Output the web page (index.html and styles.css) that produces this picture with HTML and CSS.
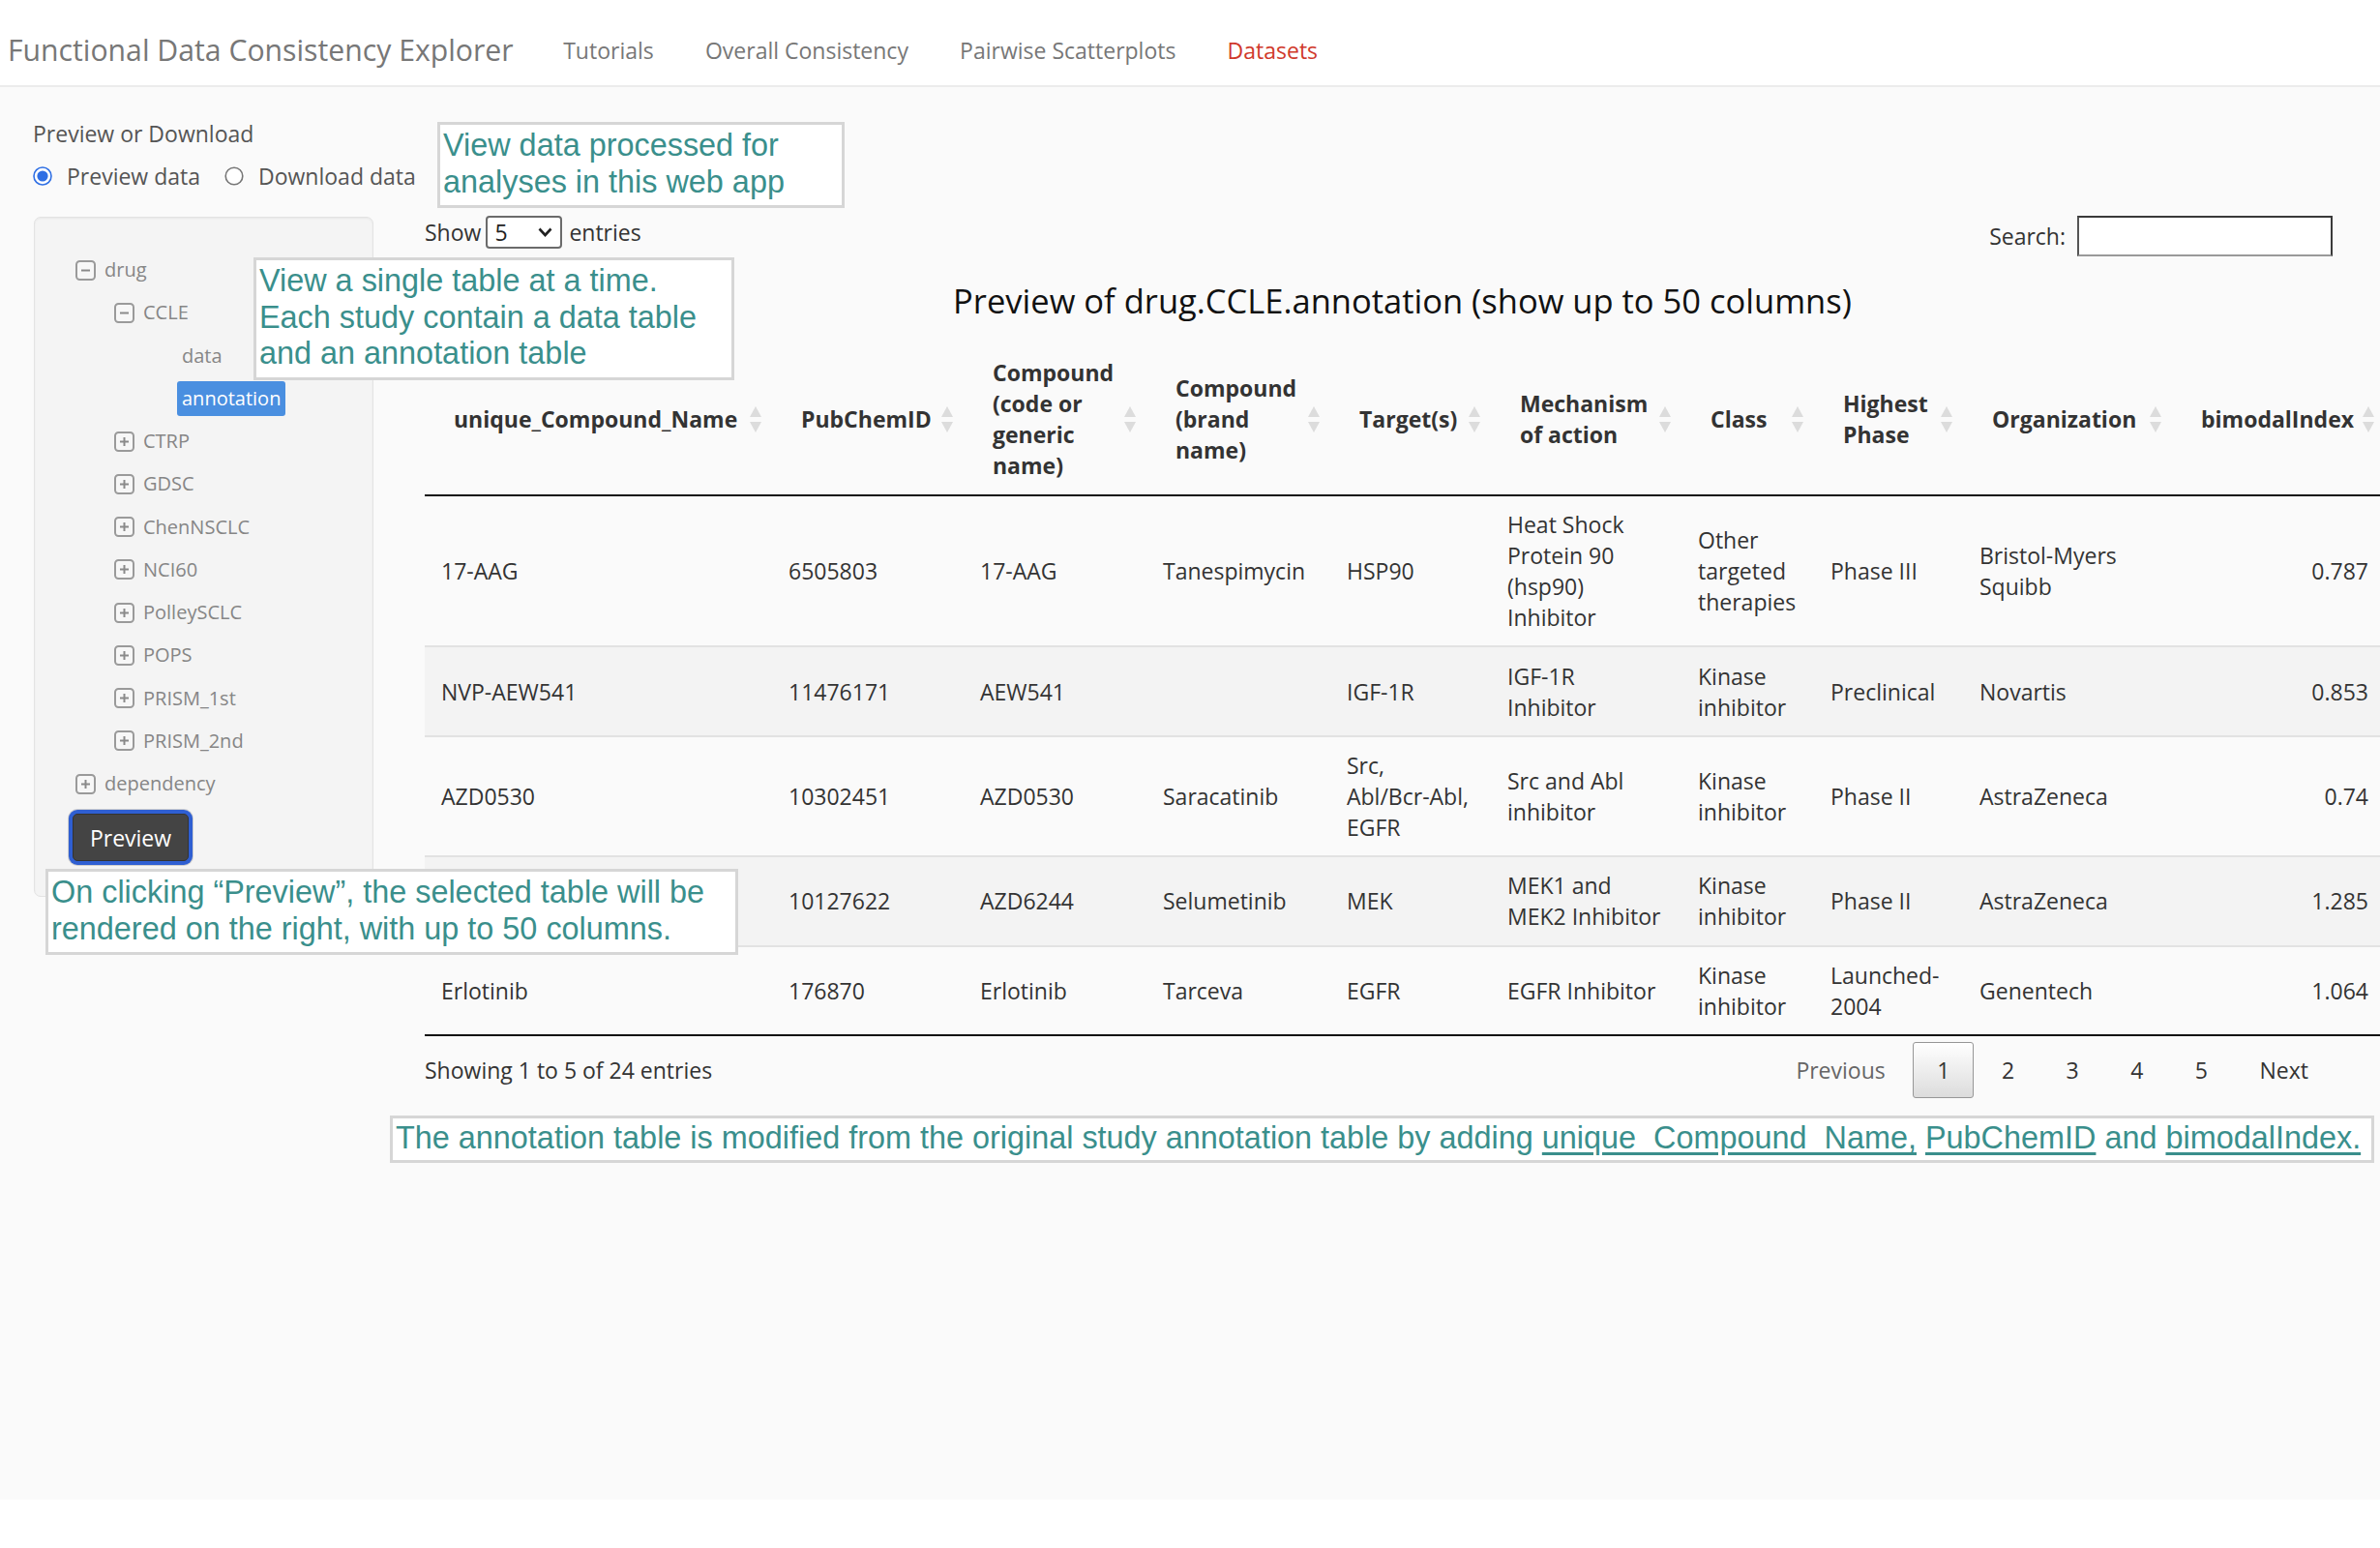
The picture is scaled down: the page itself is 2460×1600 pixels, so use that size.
FILE: index.html
```html
<!DOCTYPE html>
<html lang="en">
<head>
<meta charset="utf-8">
<title>Functional Data Consistency Explorer</title>
<link rel="stylesheet" href="styles.css">
</head>
<body>
<nav class="navbar">
  <span class="brand">Functional Data Consistency Explorer</span>
  <a class="nav-link">Tutorials</a>
  <a class="nav-link">Overall Consistency</a>
  <a class="nav-link">Pairwise Scatterplots</a>
  <a class="nav-link active">Datasets</a>
</nav>

<div class="page">
  <aside class="sidebar">
    <div class="ctl-label">Preview or Download</div>
    <div class="radios">
      <label class="radio">
        <svg class="radio-ico" width="20" height="20" viewBox="0 0 20 20"><circle cx="10" cy="10" r="9" fill="#fff" stroke="#2f6fe4" stroke-width="1.6"/><circle cx="10" cy="10" r="5.6" fill="#2f6fe4"/></svg>
        <span>Preview data</span>
      </label>
      <label class="radio">
        <svg class="radio-ico" width="20" height="20" viewBox="0 0 20 20"><circle cx="10" cy="10" r="8.8" fill="#fff" stroke="#767676" stroke-width="1.6"/></svg>
        <span>Download data</span>
      </label>
    </div>

    <div class="well">
      <ul class="tree">
        <li class="node lvl0"><svg class="tico" width="21" height="21" viewBox="0 0 21 21"><rect x="1" y="1" width="19" height="19" rx="3.5" fill="#f7f7f7" stroke="#9a9a9a" stroke-width="2"/><line x1="6" y1="10.5" x2="15" y2="10.5" stroke="#8a8a8a" stroke-width="2"/></svg><span class="tx">drug</span></li>
        <li class="node lvl1"><svg class="tico" width="21" height="21" viewBox="0 0 21 21"><rect x="1" y="1" width="19" height="19" rx="3.5" fill="#f7f7f7" stroke="#9a9a9a" stroke-width="2"/><line x1="6" y1="10.5" x2="15" y2="10.5" stroke="#8a8a8a" stroke-width="2"/></svg><span class="tx">CCLE</span></li>
        <li class="node lvl2 leaf"><span class="tslot"></span><span class="tx">data</span></li>
        <li class="node lvl2 leaf"><span class="tslot"></span><span class="tx selected">annotation</span></li>
        <li class="node lvl1"><svg class="tico" width="21" height="21" viewBox="0 0 21 21"><rect x="1" y="1" width="19" height="19" rx="3.5" fill="#f7f7f7" stroke="#9a9a9a" stroke-width="2"/><line x1="6" y1="10.5" x2="15" y2="10.5" stroke="#8a8a8a" stroke-width="2"/><line x1="10.5" y1="6" x2="10.5" y2="15" stroke="#8a8a8a" stroke-width="2"/></svg><span class="tx">CTRP</span></li>
        <li class="node lvl1"><svg class="tico" width="21" height="21" viewBox="0 0 21 21"><rect x="1" y="1" width="19" height="19" rx="3.5" fill="#f7f7f7" stroke="#9a9a9a" stroke-width="2"/><line x1="6" y1="10.5" x2="15" y2="10.5" stroke="#8a8a8a" stroke-width="2"/><line x1="10.5" y1="6" x2="10.5" y2="15" stroke="#8a8a8a" stroke-width="2"/></svg><span class="tx">GDSC</span></li>
        <li class="node lvl1"><svg class="tico" width="21" height="21" viewBox="0 0 21 21"><rect x="1" y="1" width="19" height="19" rx="3.5" fill="#f7f7f7" stroke="#9a9a9a" stroke-width="2"/><line x1="6" y1="10.5" x2="15" y2="10.5" stroke="#8a8a8a" stroke-width="2"/><line x1="10.5" y1="6" x2="10.5" y2="15" stroke="#8a8a8a" stroke-width="2"/></svg><span class="tx">ChenNSCLC</span></li>
        <li class="node lvl1"><svg class="tico" width="21" height="21" viewBox="0 0 21 21"><rect x="1" y="1" width="19" height="19" rx="3.5" fill="#f7f7f7" stroke="#9a9a9a" stroke-width="2"/><line x1="6" y1="10.5" x2="15" y2="10.5" stroke="#8a8a8a" stroke-width="2"/><line x1="10.5" y1="6" x2="10.5" y2="15" stroke="#8a8a8a" stroke-width="2"/></svg><span class="tx">NCI60</span></li>
        <li class="node lvl1"><svg class="tico" width="21" height="21" viewBox="0 0 21 21"><rect x="1" y="1" width="19" height="19" rx="3.5" fill="#f7f7f7" stroke="#9a9a9a" stroke-width="2"/><line x1="6" y1="10.5" x2="15" y2="10.5" stroke="#8a8a8a" stroke-width="2"/><line x1="10.5" y1="6" x2="10.5" y2="15" stroke="#8a8a8a" stroke-width="2"/></svg><span class="tx">PolleySCLC</span></li>
        <li class="node lvl1"><svg class="tico" width="21" height="21" viewBox="0 0 21 21"><rect x="1" y="1" width="19" height="19" rx="3.5" fill="#f7f7f7" stroke="#9a9a9a" stroke-width="2"/><line x1="6" y1="10.5" x2="15" y2="10.5" stroke="#8a8a8a" stroke-width="2"/><line x1="10.5" y1="6" x2="10.5" y2="15" stroke="#8a8a8a" stroke-width="2"/></svg><span class="tx">POPS</span></li>
        <li class="node lvl1"><svg class="tico" width="21" height="21" viewBox="0 0 21 21"><rect x="1" y="1" width="19" height="19" rx="3.5" fill="#f7f7f7" stroke="#9a9a9a" stroke-width="2"/><line x1="6" y1="10.5" x2="15" y2="10.5" stroke="#8a8a8a" stroke-width="2"/><line x1="10.5" y1="6" x2="10.5" y2="15" stroke="#8a8a8a" stroke-width="2"/></svg><span class="tx">PRISM_1st</span></li>
        <li class="node lvl1"><svg class="tico" width="21" height="21" viewBox="0 0 21 21"><rect x="1" y="1" width="19" height="19" rx="3.5" fill="#f7f7f7" stroke="#9a9a9a" stroke-width="2"/><line x1="6" y1="10.5" x2="15" y2="10.5" stroke="#8a8a8a" stroke-width="2"/><line x1="10.5" y1="6" x2="10.5" y2="15" stroke="#8a8a8a" stroke-width="2"/></svg><span class="tx">PRISM_2nd</span></li>
        <li class="node lvl0"><svg class="tico" width="21" height="21" viewBox="0 0 21 21"><rect x="1" y="1" width="19" height="19" rx="3.5" fill="#f7f7f7" stroke="#9a9a9a" stroke-width="2"/><line x1="6" y1="10.5" x2="15" y2="10.5" stroke="#8a8a8a" stroke-width="2"/><line x1="10.5" y1="6" x2="10.5" y2="15" stroke="#8a8a8a" stroke-width="2"/></svg><span class="tx">dependency</span></li>
      </ul>
      <button class="btn-preview" type="button">Preview</button>
    </div>
  </aside>

  <main class="main">
    <div class="dt-top">
      <div class="dt-length">
        <span>Show</span>
        <span class="fake-select"><span>5</span><svg width="15" height="10" viewBox="0 0 15 10"><polyline points="1.5,1.5 7.5,8 13.5,1.5" fill="none" stroke="#222" stroke-width="2.6"/></svg></span>
        <span>entries</span>
      </div>
      <div class="dt-filter">
        <span>Search:</span>
        <input class="search-input" type="search">
      </div>
    </div>

    <h4 class="tbl-title">Preview of drug.CCLE.annotation (show up to 50 columns)</h4>

    <table class="dtable">
      <colgroup>
        <col class="c1"><col class="c2"><col class="c3"><col class="c4"><col class="c5">
        <col class="c6"><col class="c7"><col class="c8"><col class="c9"><col class="c10">
      </colgroup>
      <thead>
        <tr>
          <th><div class="th-in"><span>unique_Compound_Name</span><svg class="sort" width="12" height="27" viewBox="0 0 12 27"><polygon points="6,0 12,11 0,11" fill="#dcdcdc"/><polygon points="0,16 12,16 6,27" fill="#dcdcdc"/></svg></div></th>
          <th><div class="th-in"><span>PubChemID</span><svg class="sort" width="12" height="27" viewBox="0 0 12 27"><polygon points="6,0 12,11 0,11" fill="#dcdcdc"/><polygon points="0,16 12,16 6,27" fill="#dcdcdc"/></svg></div></th>
          <th><div class="th-in"><span>Compound (code or generic name)</span><svg class="sort" width="12" height="27" viewBox="0 0 12 27"><polygon points="6,0 12,11 0,11" fill="#dcdcdc"/><polygon points="0,16 12,16 6,27" fill="#dcdcdc"/></svg></div></th>
          <th><div class="th-in"><span>Compound (brand name)</span><svg class="sort" width="12" height="27" viewBox="0 0 12 27"><polygon points="6,0 12,11 0,11" fill="#dcdcdc"/><polygon points="0,16 12,16 6,27" fill="#dcdcdc"/></svg></div></th>
          <th><div class="th-in"><span>Target(s)</span><svg class="sort" width="12" height="27" viewBox="0 0 12 27"><polygon points="6,0 12,11 0,11" fill="#dcdcdc"/><polygon points="0,16 12,16 6,27" fill="#dcdcdc"/></svg></div></th>
          <th><div class="th-in"><span>Mechanism of action</span><svg class="sort" width="12" height="27" viewBox="0 0 12 27"><polygon points="6,0 12,11 0,11" fill="#dcdcdc"/><polygon points="0,16 12,16 6,27" fill="#dcdcdc"/></svg></div></th>
          <th><div class="th-in"><span>Class</span><svg class="sort" width="12" height="27" viewBox="0 0 12 27"><polygon points="6,0 12,11 0,11" fill="#dcdcdc"/><polygon points="0,16 12,16 6,27" fill="#dcdcdc"/></svg></div></th>
          <th><div class="th-in"><span>Highest Phase</span><svg class="sort" width="12" height="27" viewBox="0 0 12 27"><polygon points="6,0 12,11 0,11" fill="#dcdcdc"/><polygon points="0,16 12,16 6,27" fill="#dcdcdc"/></svg></div></th>
          <th><div class="th-in"><span>Organization</span><svg class="sort" width="12" height="27" viewBox="0 0 12 27"><polygon points="6,0 12,11 0,11" fill="#dcdcdc"/><polygon points="0,16 12,16 6,27" fill="#dcdcdc"/></svg></div></th>
          <th><div class="th-in"><span>bimodalIndex</span><svg class="sort" width="12" height="27" viewBox="0 0 12 27"><polygon points="6,0 12,11 0,11" fill="#dcdcdc"/><polygon points="0,16 12,16 6,27" fill="#dcdcdc"/></svg></div></th>
        </tr>
      </thead>
      <tbody>
        <tr>
          <td>17-AAG</td><td>6505803</td><td>17-AAG</td><td>Tanespimycin</td><td>HSP90</td>
          <td>Heat Shock Protein 90 (hsp90) Inhibitor</td><td>Other targeted therapies</td><td>Phase III</td><td>Bristol-Myers Squibb</td><td class="num">0.787</td>
        </tr>
        <tr>
          <td>NVP-AEW541</td><td>11476171</td><td>AEW541</td><td></td><td>IGF-1R</td>
          <td>IGF-1R Inhibitor</td><td>Kinase inhibitor</td><td>Preclinical</td><td>Novartis</td><td class="num">0.853</td>
        </tr>
        <tr>
          <td>AZD0530</td><td>10302451</td><td>AZD0530</td><td>Saracatinib</td><td>Src, <span class="nw">Abl/Bcr-Abl,</span> EGFR</td>
          <td>Src and Abl inhibitor</td><td>Kinase inhibitor</td><td>Phase II</td><td>AstraZeneca</td><td class="num">0.74</td>
        </tr>
        <tr>
          <td>AZD6244</td><td>10127622</td><td>AZD6244</td><td>Selumetinib</td><td>MEK</td>
          <td>MEK1 and MEK2 Inhibitor</td><td>Kinase inhibitor</td><td>Phase II</td><td>AstraZeneca</td><td class="num">1.285</td>
        </tr>
        <tr>
          <td>Erlotinib</td><td>176870</td><td>Erlotinib</td><td>Tarceva</td><td>EGFR</td>
          <td>EGFR Inhibitor</td><td>Kinase inhibitor</td><td>Launched-2004</td><td>Genentech</td><td class="num">1.064</td>
        </tr>
      </tbody>
    </table>

    <div class="dt-bottom">
      <div class="dt-info">Showing 1 to 5 of 24 entries</div>
      <div class="dt-paginate">
        <a class="pg disabled">Previous</a>
        <a class="pg current">1</a>
        <a class="pg">2</a>
        <a class="pg">3</a>
        <a class="pg">4</a>
        <a class="pg">5</a>
        <a class="pg">Next</a>
      </div>
    </div>
  </main>

  <div class="callout co-1">View data processed for<br>analyses in this web app</div>
  <div class="callout co-2">View a single table at a time.<br>Each study contain a data table<br>and an annotation table</div>
  <div class="callout co-3">On clicking “Preview”, the selected table will be<br>rendered on the right, with up to 50 columns.</div>
  <div class="callout co-4">The annotation table is modified from the original study annotation table by adding <u>unique_Compound_Name,</u> <u>PubChemID</u> and <u>bimodalIndex.</u></div>
</div>
</body>
</html>
```

FILE: styles.css
```css
* { box-sizing: border-box; }

html, body {
  margin: 0;
  padding: 0;
  background: #ffffff;
}

body {
  font-family: "Open Sans", "DejaVu Sans", sans-serif;
  font-size: 23px;
  line-height: 32px;
  color: #333;
}

/* ---------- navbar ---------- */
.navbar {
  height: 90px;
  display: flex;
  align-items: center;
  padding: 16px 0 0 8px;
  background: #ffffff;
  border-bottom: 2px solid #ececec;
}

.brand {
  font-size: 30.2px;
  color: #777;
  margin-right: 25px;
  white-space: nowrap;
}

.nav-link {
  font-size: 23px;
  color: #777;
  padding: 0 26.6px;
  white-space: nowrap;
}

.nav-link.active {
  color: #d0392b;
}

/* ---------- page ---------- */
.page {
  position: relative;
  display: flex;
  min-height: 1460px;
  background: #fafafa;
  overflow: hidden;
}

/* ---------- sidebar ---------- */
.sidebar {
  flex: 0 0 414px;
  width: 414px;
  min-width: 0;
  padding: 32px 0 0 34px;
}

.ctl-label {
  color: #555;
  line-height: 32px;
}

.radios {
  display: flex;
  align-items: center;
  margin-top: 12px;
  height: 32px;
  color: #555;
}

.radio {
  display: flex;
  align-items: center;
  margin-right: 25px;
  white-space: nowrap;
}

.radio-ico {
  margin-right: 15px;
  flex: none;
}

.well {
  margin: 26px 0 0 1px;
  width: 351px;
  height: 703px;
  background: #f4f4f4;
  border: 1px solid #e3e3e3;
  border-radius: 7px;
  box-shadow: inset 0 1px 2px rgba(0, 0, 0, 0.05);
  padding: 32px 0 0 39px;
}

.tree {
  list-style: none;
  margin: 0 0 0 3px;
  padding: 0;
  font-size: 20px;
  color: #868686;
}

.node {
  display: flex;
  align-items: center;
  height: 44.25px;
  white-space: nowrap;
}

.lvl1 { padding-left: 40px; }
.lvl2 { padding-left: 80px; }

.tico {
  flex: none;
  margin-right: 9px;
}

.tslot {
  flex: none;
  width: 21px;
  margin-right: 4px;
}

.leaf .tx {
  padding: 0 5px;
}

.tx.selected {
  background: #4a8fe0;
  color: #ffffff;
  border-radius: 3px;
  line-height: 36px;
}

.btn-preview {
  display: block;
  margin: 9px 0 0 0;
  width: 120px;
  height: 49px;
  font-family: "Open Sans", "DejaVu Sans", sans-serif;
  font-size: 23px;
  color: #ffffff;
  background: #444444;
  border: 1px solid #333;
  border-radius: 5px;
  box-shadow: 0 0 0 4px #2f5fd2, 0 0 0 5px #cfcfcf;
}

/* ---------- main ---------- */
.main {
  flex: 1 1 auto;
  min-width: 0;
  padding: 133px 0 0 25px;
}

.dt-top {
  display: flex;
  justify-content: space-between;
  align-items: flex-start;
  margin-right: 49px;
  height: 42px;
}

.dt-length {
  display: flex;
  align-items: center;
  height: 34px;
  color: #333;
}

.fake-select {
  display: inline-flex;
  align-items: center;
  justify-content: space-between;
  width: 79px;
  height: 34px;
  margin: 0 7px 0 5px;
  padding: 0 8px 0 7px;
  background: #fff;
  border: 2px solid #6b6b6b;
  border-radius: 4px;
  color: #222;
}

.dt-filter {
  display: flex;
  align-items: center;
  height: 42px;
  color: #333;
}

.search-input {
  width: 264px;
  height: 42px;
  margin-left: 12px;
  background: #fff;
  border: 2px solid #3a3a3a;
  border-bottom-color: #9a9a9a;
  border-left-color: #555;
}

.tbl-title {
  margin: 22px 0 0 0;
  text-align: center;
  font-size: 34.5px;
  line-height: 48px;
  font-weight: 400;
  color: #111;
}

/* ---------- table ---------- */
.dtable {
  width: 2026px;
  table-layout: fixed;
  border-collapse: separate;
  border-spacing: 0;
  margin-top: 19px;
}

.c1 { width: 359px; }
.c2 { width: 198px; }
.c3 { width: 189px; }
.c4 { width: 190px; }
.c5 { width: 166px; }
.c6 { width: 197px; }
.c7 { width: 137px; }
.c8 { width: 154px; }
.c9 { width: 216px; }
.c10 { width: 220px; }

.dtable th {
  text-align: left;
  font-weight: 700;
  color: #333;
  padding: 15px 11px 14px 30px;
  border-bottom: 2px solid #111;
  vertical-align: middle;
}

.th-in {
  display: flex;
  align-items: center;
  justify-content: space-between;
}

.th-in span {
  padding-right: 6px;
}

.sort {
  flex: none;
}

.dtable td {
  padding: 13.2px 17px;
  vertical-align: middle;
  color: #333;
}

.nw {
  white-space: nowrap;
}

.dtable tbody tr:nth-child(n+2) td {
  border-top: 2px solid #e2e2e2;
}

.dtable tbody tr:nth-child(even) td {
  background: #f3f3f3;
}

.dtable tbody tr:last-child td {
  border-bottom: 2px solid #111;
}

.dtable td.num {
  text-align: right;
}

.dt-bottom {
  display: flex;
  justify-content: space-between;
  align-items: center;
  margin: 6px 49px 0 0;
  height: 58px;
}

.dt-info {
  color: #333;
}

.dt-paginate {
  display: flex;
  align-items: center;
}

.pg {
  display: block;
  padding: 12px 24px;
  margin-left: 3.5px;
  border: 1px solid transparent;
  border-radius: 3px;
  color: #333;
  line-height: 32px;
}

.pg.disabled {
  color: #666;
}

.pg.current {
  border-color: #979797;
  background: linear-gradient(to bottom, #ffffff 0%, #dcdcdc 100%);
}

/* ---------- annotation callouts (overlays) ---------- */
.callout {
  position: absolute;
  background: #ffffff;
  border: 3px solid #d6d6d6;
  padding: 3px 3px 5px 3px;
  font-family: "Liberation Sans", Arial, sans-serif;
  font-size: 32.4px;
  line-height: 37.5px;
  color: #3a8f8c;
  white-space: nowrap;
}

.callout u {
  text-decoration: underline;
  text-underline-offset: 4px;
}

.co-1 { left: 452px; top: 36px; width: 421px; }
.co-2 { left: 262px; top: 176px; width: 497px; }
.co-3 { left: 47px; top: 808px; width: 716px; }
.co-4 { left: 403px; top: 1063px; width: 2051px; padding-top: 2px; padding-bottom: 3px; }
```
